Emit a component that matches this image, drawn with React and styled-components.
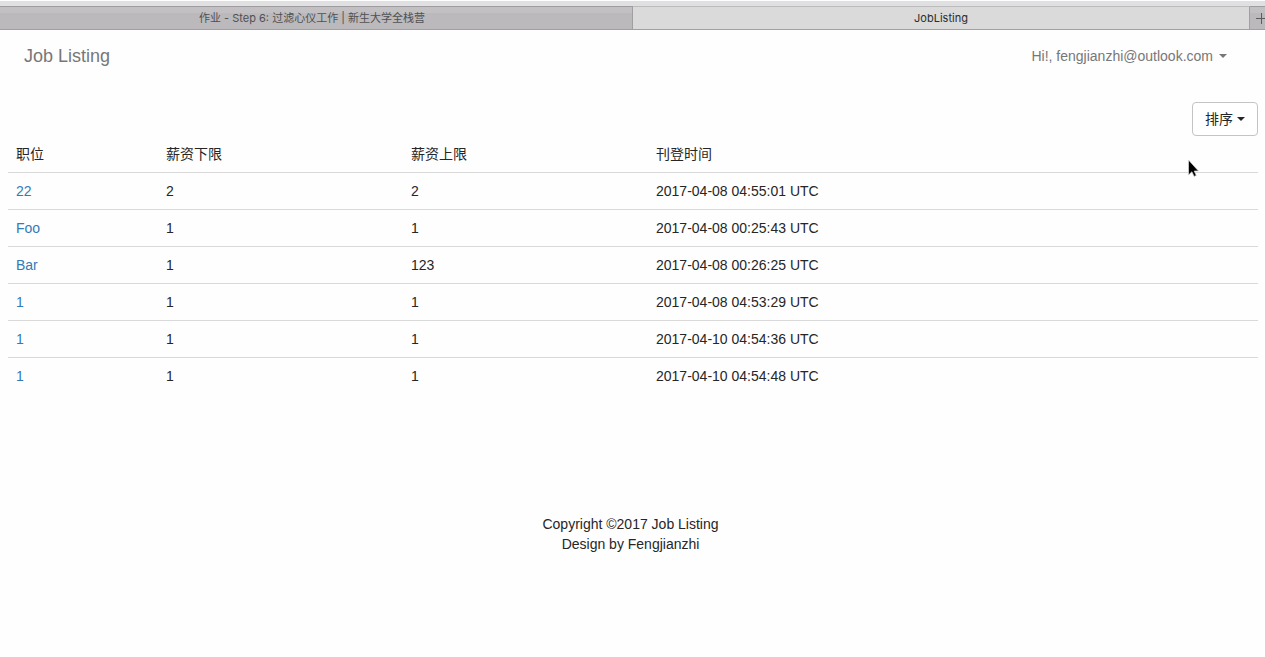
import React from "react";
import styled, { createGlobalStyle } from "styled-components";

const GlobalStyle = createGlobalStyle`
  *, *::before, *::after { box-sizing: border-box; }
  body {
    margin: 0;
    background: #fefefe;
    color: #262626;
    font: 14px/20px "Liberation Sans", "Noto Sans CJK SC", sans-serif;
  }
`;

const TabStrip = styled.div`
  display: grid;
  grid-template-columns: minmax(0, 633fr) minmax(0, 617fr) 15px;
  height: 30px;
  border-top: 1px solid #fefefe;
  padding-top: 5px;
  background: #e0dfe1;
`;

const Tab = styled.button`
  border: 0;
  border-top: 1px solid ${(p) => (p.$active ? "#bcbcbc" : "#9f9da0")};
  border-bottom: 1px solid #a19fa2;
  border-right: 1px solid #a19fa2;
  padding: ${(p) => (p.$active ? "0" : "0 8px 0 0")};
  background: ${(p) =>
    p.$active ? "#dadada" : "linear-gradient(#c2c0c3 0 6px, #bbb9bc 6px)"};
  color: ${(p) => (p.$active ? "#2c2c2c" : "#505052")};
  font: 11px/20px Inter, "Noto Sans CJK SC", sans-serif;
  white-space: nowrap;
`;

const NewTab = styled.button`
  display: flex;
  align-items: center;
  overflow: hidden;
  border: 0;
  border-top: 1px solid #9f9da0;
  border-bottom: 1px solid #a19fa2;
  padding: 0 0 0 6px;
  background: linear-gradient(#c2c0c3 0 6px, #bbb9bc 6px);
`;

const PlusIcon = styled.svg`
  flex: none;
  width: 11px;
  height: 11px;
`;

const Navbar = styled.nav`
  display: flex;
  align-items: center;
  justify-content: space-between;
  height: 52px;
  padding: 0 38px 0 24px;
`;

const Brand = styled.a`
  color: #777;
  font-size: 18px;
  text-decoration: none;
`;

const UserMenu = styled.button`
  display: flex;
  align-items: center;
  gap: 6px;
  border: 0;
  padding: 0;
  background: none;
  color: #777;
  font: inherit;
`;

const Caret = styled.span`
  border-top: 4px solid;
  border-right: 4px solid transparent;
  border-left: 4px solid transparent;
`;

const Main = styled.main`
  padding: 20px 7px 0 8px;
`;

const Toolbar = styled.div`
  display: flex;
  justify-content: flex-end;
`;

const SortButton = styled.button`
  display: flex;
  align-items: center;
  gap: 4px;
  height: 34px;
  border: 1px solid #c4c4c4;
  border-radius: 4px;
  padding: 0 12px;
  background: #fff;
  color: #262626;
  font: inherit;
`;

const JobTable = styled.table`
  width: 100%;
  table-layout: fixed;
  border-spacing: 0;
`;

const HeadCell = styled.th`
  width: ${(p) => p.$width};
  padding: 8px;
  font-weight: 400;
  text-align: left;
`;

const Cell = styled.td`
  border-top: 1px solid #d9d9d9;
  padding: 8px;
`;

const JobLink = styled.a`
  color: #337ab7;
  text-decoration: none;
`;

const Footer = styled.footer`
  padding: 120px 4px 24px 0;
  text-align: center;
`;

const FooterLine = styled.p`
  margin: 0;
`;

const Pointer = styled.svg`
  position: absolute;
  top: 159px;
  left: 1187px;
  width: 13px;
  height: 19px;
  pointer-events: none;
`;

const columns = [
  { label: "职位", width: "12%" },
  { label: "薪资下限", width: "19.6%" },
  { label: "薪资上限", width: "19.6%" },
  { label: "刊登时间", width: "auto" },
];

const jobs = [
  { title: "22", min: 2, max: 2, posted: "2017-04-08 04:55:01 UTC" },
  { title: "Foo", min: 1, max: 1, posted: "2017-04-08 00:25:43 UTC" },
  { title: "Bar", min: 1, max: 123, posted: "2017-04-08 00:26:25 UTC" },
  { title: "1", min: 1, max: 1, posted: "2017-04-08 04:53:29 UTC" },
  { title: "1", min: 1, max: 1, posted: "2017-04-10 04:54:36 UTC" },
  { title: "1", min: 1, max: 1, posted: "2017-04-10 04:54:48 UTC" },
];

export default function App() {
  return (
    <>
      <GlobalStyle />
      <TabStrip>
        <Tab>作业 - Step 6: 过滤心仪工作 | 新生大学全栈营</Tab>
        <Tab $active>JobListing</Tab>
        <NewTab aria-label="New tab">
          <PlusIcon viewBox="0 0 11 11" fill="none" stroke="#5c5b5d">
            <path d="M5.5 0v11M0 5.5h11" />
          </PlusIcon>
        </NewTab>
      </TabStrip>
      <Navbar>
        <Brand href="#">Job Listing</Brand>
        <UserMenu>
          Hi!, fengjianzhi@outlook.com
          <Caret />
        </UserMenu>
      </Navbar>
      <Main>
        <Toolbar>
          <SortButton>
            排序
            <Caret />
          </SortButton>
        </Toolbar>
        <JobTable>
          <thead>
            <tr>
              {columns.map((c) => (
                <HeadCell key={c.label} $width={c.width} scope="col">
                  {c.label}
                </HeadCell>
              ))}
            </tr>
          </thead>
          <tbody>
            {jobs.map((job) => (
              <tr key={job.posted}>
                <Cell>
                  <JobLink href="#">{job.title}</JobLink>
                </Cell>
                <Cell>{job.min}</Cell>
                <Cell>{job.max}</Cell>
                <Cell>{job.posted}</Cell>
              </tr>
            ))}
          </tbody>
        </JobTable>
      </Main>
      <Footer>
        <FooterLine>Copyright ©2017 Job Listing</FooterLine>
        <FooterLine>Design by Fengjianzhi</FooterLine>
      </Footer>
      <Pointer viewBox="0 0 13 19" aria-hidden="true">
        <path
          d="M1.5 1v15l3.4-3.2 2.2 4.6 2.2-1-2.1-4.4h4.3z"
          fill="#000"
          stroke="#ddd"
          strokeWidth="0.7"
        />
      </Pointer>
    </>
  );
}
